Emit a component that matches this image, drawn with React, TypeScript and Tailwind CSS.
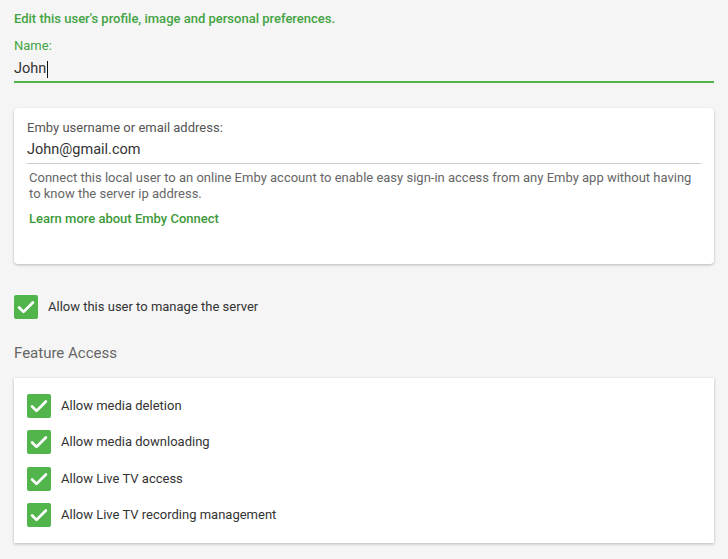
import React from "react";

function Check() {
  return (
    <div className="w-[24px] h-[24px] rounded-[2px] bg-[#52b54b] flex items-center justify-center shrink-0">
      <svg width="22" height="22" viewBox="0 0 24 24" fill="none">
        <path d="M4.5 12.5l4.8 4.8L19.5 7" stroke="#fff" strokeWidth="3" strokeLinecap="round" strokeLinejoin="round" />
      </svg>
    </div>
  );
}

export default function App() {
  const features = [
    "Allow media deletion",
    "Allow media downloading",
    "Allow Live TV access",
    "Allow Live TV recording management",
  ];
  return (
    <div className="min-h-[559px] bg-[#f5f5f5] px-[14px] pt-[10px] pb-[16px] font-['Roboto',sans-serif] text-[#222]">
      <div className="text-[13px] leading-[18px] font-medium text-[#43a443]">
        Edit this user's profile, image and personal preferences.
      </div>
      <div className="mt-[9px] text-[13px] leading-[18px] text-[#43a443]">Name:</div>
      <div className="mt-[4px] pb-[2px] border-b-2 border-[#52b54b] text-[14.5px] leading-[20px] text-[#333] flex items-center">
        <span>John</span>
        <span className="inline-block w-px h-[17px] bg-[#111] ml-[1px]" />
      </div>

      <div className="mt-[25px] bg-white rounded-[4px] shadow-[0_1px_3px_rgba(0,0,0,0.25)] px-[13px] pt-[11px] pb-[36px]">
        <div className="text-[13px] leading-[18px] text-[#555]">Emby username or email address:</div>
        <div className="mt-[3px] pb-[3px] border-b border-[#ccc] text-[14.5px] leading-[20px] text-[#333]">
          John@gmail.com
        </div>
        <div className="mt-[6px] pl-[2px] text-[13px] leading-[16px] text-[#666]">
          Connect this local user to an online Emby account to enable easy sign-in access from any Emby app without having to know the server ip address.
        </div>
        <div className="mt-[8px] pl-[2px] text-[13px] leading-[18px] font-medium text-[#3d9a3a]">
          Learn more about Emby Connect
        </div>
      </div>

      <div className="mt-[31px] flex items-center gap-[10px]">
        <Check />
        <span className="text-[13px] leading-[18px] text-[#333]">Allow this user to manage the server</span>
      </div>

      <div className="mt-[24px] text-[15px] leading-[20px] text-[#666]">Feature Access</div>

      <div className="mt-[15px] bg-white shadow-[0_1px_3px_rgba(0,0,0,0.25)] px-[13px] pt-[16px] pb-[16px] flex flex-col gap-[12.3px]">
        {features.map((f) => (
          <div key={f} className="flex items-center gap-[10px]">
            <Check />
            <span className="text-[13px] leading-[18px] text-[#333]">{f}</span>
          </div>
        ))}
      </div>
    </div>
  );
}
